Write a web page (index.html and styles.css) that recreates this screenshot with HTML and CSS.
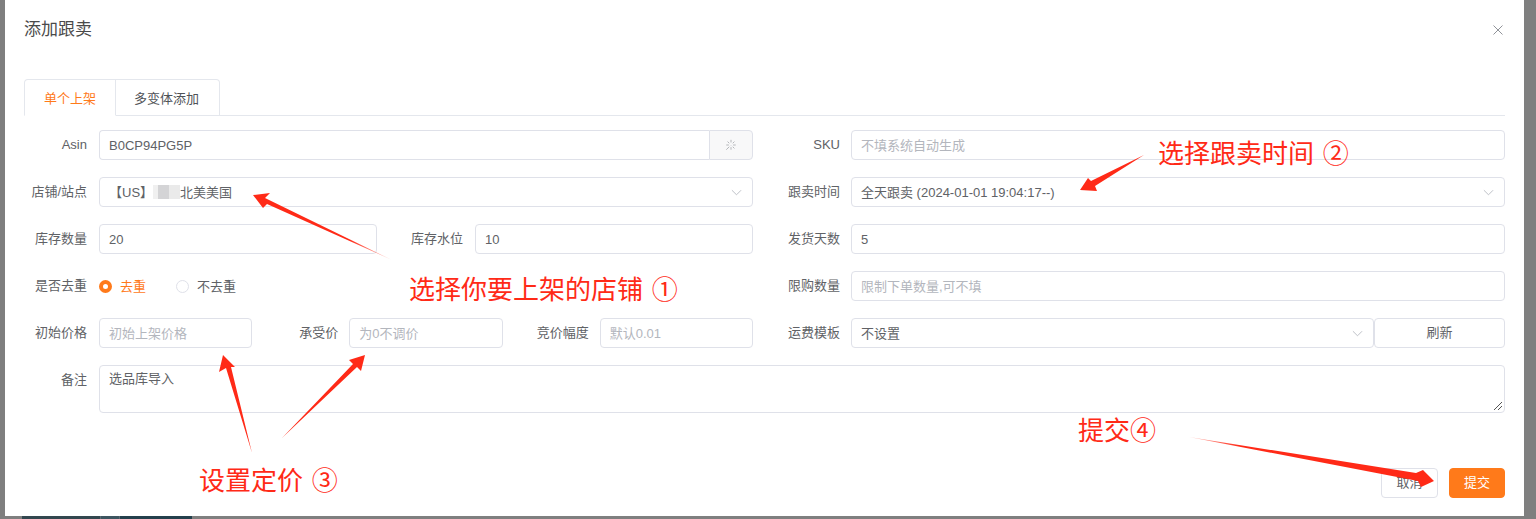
FILE: index.html
```html
<!DOCTYPE html>
<html lang="zh-CN">
<head>
<meta charset="utf-8">
<title>添加跟卖</title>
<link rel="stylesheet" href="styles.css">
</head>
<body>
<div class="backdrop">
  <div class="bg-strip"></div>
  <section class="modal">
    <header class="modal-head">
      <h2 class="modal-title">添加跟卖</h2>
      <svg class="close" viewBox="0 0 10 10"><path d="M.5.5l9 9M9.500.5l-9 9"/></svg>
    </header>
    <nav class="tabs">
      <div class="tab tab-active">单个上架</div>
      <div class="tab">多变体添加</div>
    </nav>
    <form class="form">
      <div class="row">
        <div class="col">
          <label class="label">Asin</label>
          <div class="input-group">
            <div class="input joined">B0CP94PG5P</div>
            <div class="addon">
              <svg class="wand" viewBox="0 0 14 14"><path d="M7 1v3M7 7v.5M3 3l2 2M11 3L9 5M1.500 7h3M9.500 7h3M9 9l2 2M7 9.500v3M5 9l-3.500 3.500"/></svg>
            </div>
          </div>
        </div>
        <div class="col">
          <label class="label">SKU</label>
          <div class="input placeholder">不填系统自动生成</div>
        </div>
      </div>
      <div class="row">
        <div class="col">
          <label class="label">店铺/站点</label>
          <div class="input select">
            <span class="store">【US】<span class="blur"></span>北美美国</span>
            <svg class="chev" viewBox="0 0 12 7"><path d="M1 1l5 5 5-5"/></svg>
          </div>
        </div>
        <div class="col">
          <label class="label">跟卖时间</label>
          <div class="input select">
            <span>全天跟卖 (2024-01-01 19:04:17--)</span>
            <svg class="chev" viewBox="0 0 12 7"><path d="M1 1l5 5 5-5"/></svg>
          </div>
        </div>
      </div>
      <div class="row">
        <div class="col">
          <label class="label">库存数量</label>
          <div class="input">20</div>
          <label class="label label-mid">库存水位</label>
          <div class="input">10</div>
        </div>
        <div class="col">
          <label class="label">发货天数</label>
          <div class="input">5</div>
        </div>
      </div>
      <div class="row">
        <div class="col">
          <label class="label">是否去重</label>
          <div class="radios">
            <span class="radio radio-on"><i class="dot dot-on"></i><span class="radio-text">去重</span></span>
            <span class="radio"><i class="dot"></i><span class="radio-text">不去重</span></span>
          </div>
        </div>
        <div class="col">
          <label class="label">限购数量</label>
          <div class="input placeholder">限制下单数量,可不填</div>
        </div>
      </div>
      <div class="row">
        <div class="col">
          <label class="label">初始价格</label>
          <div class="input placeholder">初始上架价格</div>
          <label class="label label-mid2">承受价</label>
          <div class="input placeholder">为0不调价</div>
          <label class="label label-mid3">竞价幅度</label>
          <div class="input placeholder">默认0.01</div>
        </div>
        <div class="col">
          <label class="label">运费模板</label>
          <div class="input select">
            <span>不设置</span>
            <svg class="chev" viewBox="0 0 12 7"><path d="M1 1l5 5 5-5"/></svg>
          </div>
          <button type="button" class="btn refresh">刷新</button>
        </div>
      </div>
      <div class="row row-note">
        <label class="label">备注</label>
        <div class="input textarea">选品库导入
          <svg class="grip" viewBox="0 0 10 10"><path d="M1 9l8-8M5 9l4-4"/></svg>
        </div>
      </div>
    </form>
    <footer class="modal-foot">
      <button type="button" class="btn">取消</button>
      <button type="button" class="btn btn-primary">提交</button>
    </footer>
  </section>

  <svg class="arrows" viewBox="0 0 1536 519">
    <defs>
      <linearGradient id="fade1" gradientUnits="userSpaceOnUse" x1="392" y1="260" x2="350" y2="240"><stop offset="0" stop-color="#ff2a17" stop-opacity=".2"/><stop offset="1" stop-color="#ff2a17"/></linearGradient>
      <linearGradient id="fade5" gradientUnits="userSpaceOnUse" x1="1189" y1="437" x2="1240" y2="445"><stop offset="0" stop-color="#ff2a17" stop-opacity=".3"/><stop offset="1" stop-color="#ff2a17"/></linearGradient>
    </defs>
    <path fill="url(#fade1)" d="M392 260L267 204 263 208 253 195 270 193 265 198Z"/>
    <path d="M1144 155L1095 186 1097 191 1080 190 1088 178 1091 181Z"/>
    <path d="M252 453L226 368 219 372 223 355 235 367 231 367Z"/>
    <path d="M282 438L353 364 349 360 365 355 361 371 357 367Z"/>
    <path fill="url(#fade5)" d="M1189 437L1416 473 1423 470 1434 481 1421 487 1418 481Z"/>
  </svg>
  <div class="note note-1">选择你要上架的店铺 ①</div>
  <div class="note note-2">选择跟卖时间 ②</div>
  <div class="note note-3">设置定价 ③</div>
  <div class="note note-4">提交④</div>
</div>
</body>
</html>
```
FILE: styles.css
```css
* { box-sizing: border-box; }
html, body { margin: 0; height: 100%; }
body {
  font-family: "Liberation Sans", "Noto Sans CJK SC", sans-serif;
  font-size: 13px;
  color: #606266;
  overflow: hidden;
}
.backdrop {
  position: relative;
  width: 1536px;
  height: 519px;
  background: #7f7f7f;
  overflow: hidden;
  padding-left: 5px;
}
.bg-strip {
  position: absolute;
  left: 22px;
  bottom: 0;
  width: 170px;
  height: 3px;
  background: linear-gradient(90deg, #33474f 0 78px, #5a6a72 78px 79px, #3d5560 79px 97px, #5a6a72 97px 98px, #24404c 98px 100%);
}
.modal {
  position: relative;
  width: 1519px;
  height: 516px;
  background: #fff;
  padding: 0 19px;
  display: flex;
  flex-direction: column;
}
.modal-head {
  height: 79px;
  padding-top: 19px;
  display: flex;
  justify-content: space-between;
  align-items: flex-start;
  flex: none;
}
.modal-title {
  margin: 0;
  font-size: 17px;
  line-height: 22px;
  font-weight: 400;
  color: #4a4a4a;
}
.close {
  width: 10px;
  height: 10px;
  margin-top: 6px;
  margin-right: 2px;
  fill: none;
  stroke: #909399;
  stroke-width: 1;
}
.tabs {
  display: flex;
  height: 37px;
  border-bottom: 1px solid #e4e7ed;
  flex: none;
}
.tab {
  height: 37px;
  line-height: 38px;
  padding: 0 19px;
  border: 1px solid #e4e7ed;
  border-left: 0;
  color: #4f5257;
  background: #fff;
}
.tab:last-child { border-radius: 0 4px 0 0; padding: 0 0 0 18px; width: 104px; }
.tab-active {
  color: #ff7a1a;
  border-left: 1px solid #e4e7ed;
  border-bottom-color: #fff;
  border-radius: 4px 0 0 0;
  width: 92px;
}
.form {
  padding-top: 14px;
  flex: none;
  display: flex;
  flex-direction: column;
  gap: 17px;
}
.row {
  display: grid;
  grid-template-columns: 729px 718px;
  column-gap: 34px;
  height: 30px;
}
.col {
  display: flex;
  align-items: center;
  min-width: 0;
}
.label {
  flex: none;
  width: 63px;
  margin-right: 12px;
  text-align: right;
  white-space: nowrap;
  line-height: 30px;
  color: #606266;
}
.col + .col .label { width: 53px; margin-right: 11px; }
.label-mid { width: 86px; margin-right: 12px; }
.label-mid2 { width: 86px; margin-right: 11px; }
.label-mid3 { width: 86px; margin-right: 11px; }
.input {
  flex: 1 1 0;
  min-width: 0;
  height: 30px;
  line-height: 29px;
  padding: 0 9px;
  border: 1px solid #dfe1e9;
  border-radius: 4px;
  background: #fff;
  color: #606266;
  white-space: nowrap;
}
.placeholder { color: #b3b6bd; }
.input-group { flex: 1; display: flex; min-width: 0; }
.joined { border-radius: 4px 0 0 4px; border-right: 0; }
.addon {
  flex: none;
  width: 44px;
  height: 30px;
  display: flex;
  align-items: center;
  justify-content: center;
  background: #f8f8f9;
  border: 1px solid #dfe1e9;
  border-radius: 0 4px 4px 0;
}
.wand {
  width: 12px;
  height: 12px;
  fill: none;
  stroke: #a9abb0;
  stroke-width: 1;
}
.select {
  display: flex;
  align-items: center;
  justify-content: space-between;
  padding-right: 10px;
}
.store { display: inline-flex; align-items: center; }
.blur {
  display: inline-block;
  width: 27px;
  height: 14px;
  background: linear-gradient(90deg, #f0f0f0 0 18%, #d4d4d6 18% 58%, #eaeaea 58% 100%);
}
.chev {
  width: 11px;
  height: 7px;
  fill: none;
  stroke: #b8bbc2;
  stroke-width: 1;
  flex: none;
}
.radios { display: flex; align-items: center; gap: 30px; }
.radio { display: inline-flex; align-items: center; gap: 8px; color: #606266; }
.radio-on { color: #ff7a1a; }
.radio-text { padding-bottom: 2px; }
.dot {
  width: 13px;
  height: 13px;
  border-radius: 50%;
  border: 1px solid #dfe1e9;
  background: #fff;
  flex: none;
}
.dot-on { border: 4px solid #ff7a1a; }
.btn {
  font: inherit;
  width: 57px;
  height: 30px;
  padding: 0 0 3px;
  border: 1px solid #dfe1e9;
  border-radius: 4px;
  background: #fff;
  color: #606266;
}
.refresh {
  flex: none;
  width: 131px;
}
.row-note {
  display: flex;
  column-gap: 0;
  height: 48px;
  align-items: flex-start;
}
.textarea {
  position: relative;
  height: 48px;
  line-height: 18px;
  padding-top: 4px;
}
.grip {
  position: absolute;
  right: 1px;
  bottom: 1px;
  width: 10px;
  height: 10px;
  fill: none;
  stroke: #555;
  stroke-width: 1;
}
.modal-foot {
  display: flex;
  justify-content: flex-end;
  gap: 11px;
  padding-top: 55px;
}
.btn-primary {
  width: 56px;
  background: #ff7a1a;
  border-color: #ff7a1a;
  color: #fff;
}
.arrows {
  position: absolute;
  left: 0;
  top: 0;
  width: 1536px;
  height: 519px;
  fill: #ff2a17;
  pointer-events: none;
}
.note {
  position: absolute;
  font-family: "Noto Sans CJK SC", sans-serif;
  font-size: 26px;
  line-height: 36px;
  word-spacing: 3px;
  color: #ff2a17;
  white-space: nowrap;
}
.note-1 { left: 409px; top: 270px; }
.note-2 { left: 1158px; top: 134px; }
.note-3 { left: 199px; top: 461px; }
.note-4 { left: 1078px; top: 411px; }
```
